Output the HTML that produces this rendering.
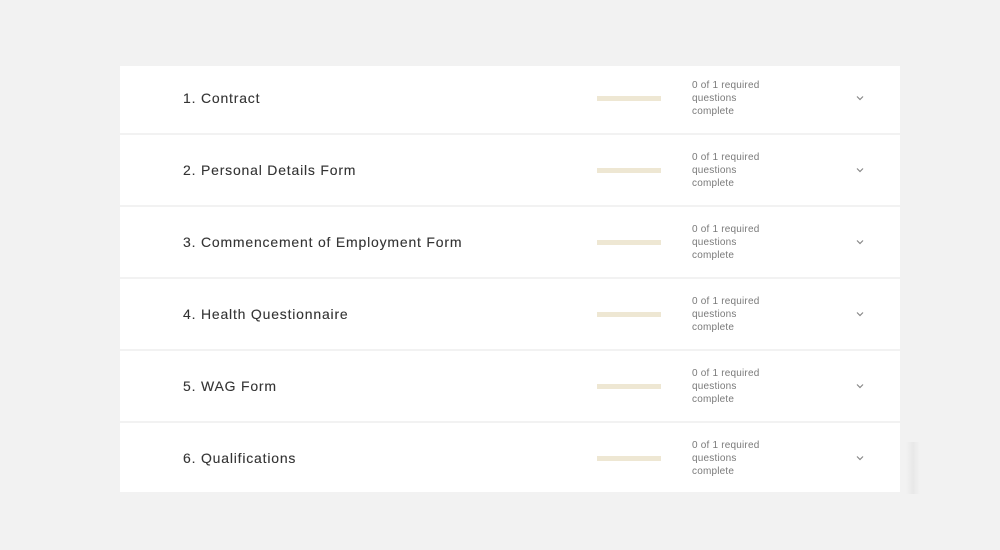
<!DOCTYPE html>
<html><head><style>
body{margin:0;width:1000px;height:550px;background:#f2f2f2;position:relative;overflow:hidden;font-family:"Liberation Sans",sans-serif}
.row{position:absolute;left:120px;width:780px;background:#fff}
.t{position:absolute;left:63px;font-size:14px;color:#333;letter-spacing:0.8px;-webkit-text-stroke:0.1px #333}
.bar{position:absolute;left:477px;width:64px;height:5px;background:#eee7d3}
.s{position:absolute;left:572px;font-size:10px;line-height:13px;color:#7a7a7a;letter-spacing:0.2px}
.c{position:absolute;left:736px;width:8px;height:6px}
</style></head><body>
<div class="row" style="top:66px;height:67px"><div class="t" style="top:24px">1. Contract</div><div class="bar" style="top:30px"></div><div class="s" style="top:13px">0 of 1 required<br>questions<br>complete</div><svg class="c" style="top:29px" viewBox="0 0 8 6"><path d="M1 1.5L4 4.5L7 1.5" stroke="#888" stroke-width="1.2" fill="none"/></svg></div>
<div class="row" style="top:135px;height:70px"><div class="t" style="top:27px">2. Personal Details Form</div><div class="bar" style="top:33px"></div><div class="s" style="top:16px">0 of 1 required<br>questions<br>complete</div><svg class="c" style="top:32px" viewBox="0 0 8 6"><path d="M1 1.5L4 4.5L7 1.5" stroke="#888" stroke-width="1.2" fill="none"/></svg></div>
<div class="row" style="top:207px;height:70px"><div class="t" style="top:27px">3. Commencement of Employment Form</div><div class="bar" style="top:33px"></div><div class="s" style="top:16px">0 of 1 required<br>questions<br>complete</div><svg class="c" style="top:32px" viewBox="0 0 8 6"><path d="M1 1.5L4 4.5L7 1.5" stroke="#888" stroke-width="1.2" fill="none"/></svg></div>
<div class="row" style="top:279px;height:70px"><div class="t" style="top:27px">4. Health Questionnaire</div><div class="bar" style="top:33px"></div><div class="s" style="top:16px">0 of 1 required<br>questions<br>complete</div><svg class="c" style="top:32px" viewBox="0 0 8 6"><path d="M1 1.5L4 4.5L7 1.5" stroke="#888" stroke-width="1.2" fill="none"/></svg></div>
<div class="row" style="top:351px;height:70px"><div class="t" style="top:27px">5. WAG Form</div><div class="bar" style="top:33px"></div><div class="s" style="top:16px">0 of 1 required<br>questions<br>complete</div><svg class="c" style="top:32px" viewBox="0 0 8 6"><path d="M1 1.5L4 4.5L7 1.5" stroke="#888" stroke-width="1.2" fill="none"/></svg></div>
<div class="row" style="top:423px;height:69px"><div class="t" style="top:27px">6. Qualifications</div><div class="bar" style="top:33px"></div><div class="s" style="top:16px">0 of 1 required<br>questions<br>complete</div><svg class="c" style="top:32px" viewBox="0 0 8 6"><path d="M1 1.5L4 4.5L7 1.5" stroke="#888" stroke-width="1.2" fill="none"/></svg></div>
<div style="position:absolute;left:906px;top:442px;width:14px;height:52px;background:linear-gradient(90deg,#f2f2f2,#e8e8e8,#f2f2f2)"></div>
</body></html>
